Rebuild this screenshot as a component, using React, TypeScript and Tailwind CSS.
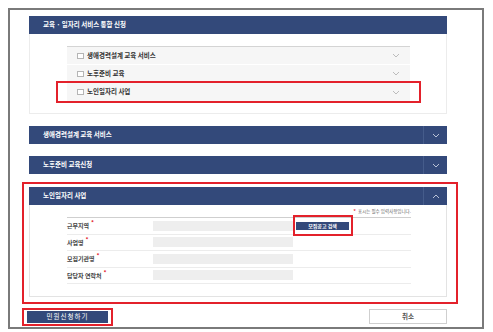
import React from "react"

const font = { fontFamily: '"Noto Sans CJK KR", "Noto Sans", sans-serif' }

function Chevron({ up = false, light = false }: { up?: boolean; light?: boolean }) {
  return (
    <svg width="8" height="5" viewBox="0 0 8 5" className={up ? "rotate-180" : ""}>
      <polyline points="1,1 4,4 7,1" fill="none" stroke={light ? "#c9d1e2" : "#b5b5b5"} strokeWidth="0.9" />
    </svg>
  )
}

function Header({ title, up = false }: { title: string; up?: boolean }) {
  return (
    <div className="flex h-[18px] items-center bg-[#33497a]">
      <div className="flex-1 pl-[14px] text-[6.5px] font-bold text-white">{title}</div>
      <div className="flex h-full w-[24px] items-center justify-center border-l border-[#455c8b]">
        <Chevron up={up} light />
      </div>
    </div>
  )
}

function RedBox({ className }: { className: string }) {
  return <div className={`pointer-events-none absolute border-2 border-[#e3212b] ${className}`} />
}

const services = ["생애경력설계 교육 서비스", "노후준비 교육", "노인일자리 사업"]
const fields = ["근무지역", "사업명", "모집기관명", "담당자 연락처"]

export default function App() {
  return (
    <div className="h-[332px] w-[493px] bg-white pl-[8px] pt-[8px]" style={font}>
      <div className="h-[321px] w-[476px] border-2 border-[#7a7a7a] pl-[19px] pt-[6px]">
        <div className="w-[418px]">
          <div>
            <div className="flex h-[18px] items-center bg-[#33497a] pl-[14px] text-[6.5px] font-bold text-white">
              교육 · 일자리 서비스 통합 신청
            </div>
            <div className="border-x border-b border-[#ececec] pb-[12px] pt-[12px]">
              <div className="ml-[37px] w-[343px] border-t border-[#d4d4d4]">
                {services.map((s, i) => (
                  <div key={s} className={`relative flex h-[18px] items-center bg-[#f6f6f6] pl-[10px] pr-[10px] ${i < 2 ? "border-b border-white" : ""}`}>
                    <span className="mr-[3px] inline-block h-[6px] w-[7px] border border-[#b5b5b5] bg-white" />
                    <span className="flex-1 text-[6.5px] font-bold text-[#333]">{s}</span>
                    <Chevron />
                    {i === 2 && <RedBox className="-inset-x-[11px] -inset-y-[2px]" />}
                  </div>
                ))}
              </div>
            </div>
          </div>

          <div className="mt-[12px]">
            <Header title="생애경력설계 교육 서비스" />
          </div>
          <div className="mt-[12px]">
            <Header title="노후준비 교육신청" />
          </div>

          <div className="relative mt-[13px]">
            <Header title="노인일자리 사업" up />
            <div className="border-x border-b border-[#e3e3e3] pb-[12px]">
              <div className="ml-[37px] w-[344px]">
                <div className="flex h-[12px] items-center justify-end pt-[1px] text-[4.5px] text-[#666]">
                  <span className="mr-[2px] text-[6px] text-[#e3212b]">*</span>
                  표시는 필수 입력사항입니다.
                </div>
                <div className="border-t border-[#cfcfcf]">
                  {fields.map((f, i) => (
                    <div key={f} className="flex h-[16.5px] items-center border-b border-[#ececec]">
                      <div className="w-[86px] text-[6px] font-bold text-[#444]">
                        {f}
                        <span className="relative -top-[3px] ml-[2px] text-[6px] text-[#e3212b]">*</span>
                      </div>
                      <div className="h-[10px] w-[140px] bg-[#eeeeee]" />
                      {i === 0 && (
                        <div className="relative ml-[3px] flex h-[8px] w-[53px] items-center justify-center bg-[#33497a] text-[5px] font-bold text-white">
                          모집공고 검색
                          <RedBox className="-left-[3px] -right-[4px] -top-[7px] -bottom-[6px]" />
                        </div>
                      )}
                    </div>
                  ))}
                </div>
              </div>
            </div>
            <RedBox className="-left-[7px] -right-[11px] -top-[5px] -bottom-[7px]" />
          </div>

          <div className="-ml-[2px] mt-[12px] flex w-[420px] items-start justify-between">
            <div className="relative mt-[2px] flex h-[12px] w-[81px] items-center justify-center bg-[#33497a] text-[6.5px] tracking-[1px] text-white">
              민원신청하기
              <RedBox className="-inset-x-[5px] -inset-y-[3px]" />
            </div>
            <div className="flex h-[15px] w-[78px] items-center justify-center border border-[#cfcfcf] bg-white text-[6.5px] font-bold text-[#555]">
              취소
            </div>
          </div>
        </div>
      </div>
    </div>
  )
}
